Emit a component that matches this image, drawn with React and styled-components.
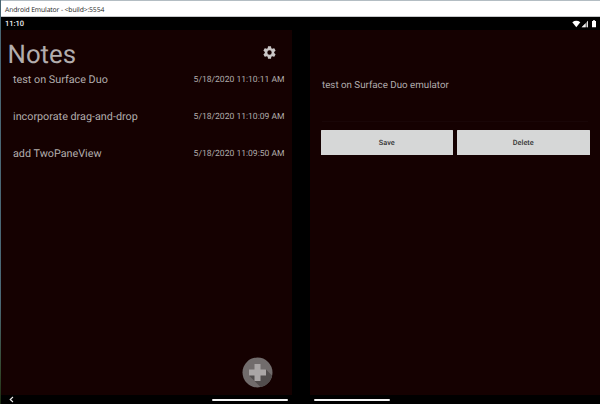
import React from "react";
import styled, { createGlobalStyle } from "styled-components";

const GlobalStyle = createGlobalStyle`
  * { box-sizing: border-box; }
  body { margin: 0; background: #000; overflow: hidden; }
`;

const Window = styled.div`
  display: flex;
  width: 600px;
  height: 404px;
  background: #000;
  font-family: Roboto, sans-serif;
  text-rendering: geometricPrecision;
  white-space: nowrap;
`;

const DesktopEdge = styled.div`
  flex: 0 0 1px;
  background: linear-gradient(#496572 0%, #4b6876 75%, #34482d 92%, #1d2c14 100%);
`;

const Screen = styled.div`
  flex: 1;
  display: flex;
  flex-direction: column;
`;

const TitleBar = styled.header`
  height: 17px;
  padding-left: 4px;
  border-top: 1px solid #b3bdc3;
  border-bottom: 1px solid #c6c8ca;
  background: #fff;
  color: #222;
  font: 6.8px/17px "Open Sans", sans-serif;
  letter-spacing: -0.12px;
`;

const StatusBar = styled.div`
  height: 13px;
  padding: 0 3px 0 4px;
  display: flex;
  align-items: center;
  justify-content: space-between;
  color: #f4f4f4;
  font-size: 7.5px;
  font-weight: 500;
  line-height: 13px;
`;

const StatusIcons = styled.svg`
  width: 26px;
  height: 10px;
`;

const Panes = styled.main`
  height: 365px;
  display: grid;
  grid-template-columns: 291px 290px;
  column-gap: 18px;
`;

const Pane = styled.section`
  display: flex;
  flex-direction: column;
  background: #150101;
  color: #b2adad;
`;

const ListHeader = styled.div`
  height: 39px;
  padding: 8px 15px 0 6.5px;
  display: flex;
  justify-content: space-between;
`;

const Heading = styled.h1`
  margin: 0;
  font-size: 25.8px;
  font-weight: 400;
  line-height: 34px;
`;

const GearIcon = styled.svg`
  width: 15px;
  height: 15px;
  margin-top: 7px;
`;

const NoteList = styled.ul`
  flex: 1;
  margin: 0;
  padding: 0;
  list-style: none;
`;

const NoteRow = styled.li`
  height: 37.2px;
  padding: 0 7.5px 0 12px;
  display: flex;
  justify-content: space-between;
  font-size: 10.8px;
  line-height: 22px;
`;

const NoteDate = styled.time`
  font-size: 8.55px;
  line-height: 23px;
`;

const AddButton = styled.button`
  align-self: flex-end;
  width: 31px;
  height: 31px;
  margin: 0 19px 7px 0;
  padding: 0;
  border: 0;
  background: none;
  line-height: 0;
`;

const NoteBody = styled.div`
  height: 92px;
  margin: 0 12px;
  padding-top: 45px;
  border-bottom: 1px solid #190607;
  color: #b2adad;
  font-size: 9.75px;
  line-height: 22px;
`;

const Actions = styled.div`
  padding: 8px 10.5px;
  display: grid;
  grid-template-columns: 1fr 1fr;
  column-gap: 4px;
`;

const ActionButton = styled.button`
  height: 25px;
  padding: 0;
  border: 0;
  border-radius: 0.5px;
  background: #d6d7d7;
  color: #333;
  font: 500 7.3px/25px Roboto, sans-serif;
  text-rendering: geometricPrecision;
`;

const NavBar = styled.footer`
  height: 9px;
  display: grid;
  grid-template-columns: 210.5px 76px 26.5px 75.5px;
  align-items: center;
`;

const BackIcon = styled.svg`
  width: 5px;
  height: 7px;
  margin-left: 8px;
`;

const GestureBar = styled.div`
  height: 2px;
  border-radius: 1px;
  background: #f5f5f5;
`;

const NOTES = [
  { title: "test on Surface Duo", date: "5/18/2020 11:10:11 AM" },
  { title: "incorporate drag-and-drop", date: "5/18/2020 11:10:09 AM" },
  { title: "add TwoPaneView", date: "5/18/2020 11:09:50 AM" },
];

export default function App() {
  return (
    <>
      <GlobalStyle />
      <Window>
        <DesktopEdge />
        <Screen>
          <TitleBar>{"Android Emulator - <build>:5554"}</TitleBar>
          <StatusBar>
            <span>11:10</span>
            <StatusIcons viewBox="0 0 26 10">
              <path d="M1.3 3.2Q5.3 .3 9.3 3.2L5.3 8.2Z" fill="#fff" />
              <path d="M10.6 8.2 17 1.8v6.4Z" fill="#777" />
              <path d="M10.6 8.2 14.6 4.2v4ZM16.1 2.7l.9-.9v6.4h-.9Z" fill="#eee" />
              <path d="M21 2.1h1V1.3h2v.8h1v6.2h-4Z" fill="#fff" />
            </StatusIcons>
          </StatusBar>
          <Panes>
            <Pane>
              <ListHeader>
                <Heading>Notes</Heading>
                <GearIcon viewBox="0 0 24 24">
                  <path
                    fill="#c9c6c6"
                    fillRule="evenodd"
                    d="M19.43 12.98c.04-.32.07-.64.07-.98s-.03-.66-.07-.98l2.11-1.65c.19-.15.24-.42.12-.64l-2-3.46c-.12-.22-.39-.3-.61-.22l-2.49 1c-.52-.4-1.08-.73-1.69-.98l-.38-2.65A.49.49 0 0 0 14 2h-4c-.25 0-.46.18-.49.42l-.38 2.65c-.61.25-1.17.59-1.69.98l-2.49-1c-.23-.09-.49 0-.61.22l-2 3.46c-.13.22-.07.49.12.64l2.11 1.65c-.04.32-.07.65-.07.98s.03.66.07.98l-2.11 1.65c-.19.15-.24.42-.12.64l2 3.46c.12.22.39.3.61.22l2.49-1c.52.4 1.08.73 1.69.98l.38 2.65c.03.24.24.42.49.42h4c.25 0 .46-.18.49-.42l.38-2.65c.61-.25 1.17-.59 1.69-.98l2.49 1c.23.09.49 0 .61-.22l2-3.46c.12-.22.07-.49-.12-.64ZM12 15.5a3.5 3.5 0 1 1 0-7 3.5 3.5 0 0 1 0 7Z"
                  />
                </GearIcon>
              </ListHeader>
              <NoteList>
                {NOTES.map((note) => (
                  <NoteRow key={note.date}>
                    <span>{note.title}</span>
                    <NoteDate>{note.date}</NoteDate>
                  </NoteRow>
                ))}
              </NoteList>
              <AddButton aria-label="Add note">
                <svg width="31" height="31" viewBox="0 0 31 31">
                  <clipPath id="disc"><circle cx="15.5" cy="15.5" r="15" /></clipPath>
                  <circle cx="15.5" cy="15.5" r="15" fill="#716c6c" />
                  <path clipPath="url(#disc)" fill="#514d4d" d="M7 18.5 20 31.5H31V19.5L24 12.5Z" />
                  <path fill="#aaa6a6" d="M12.5 7h6v5.5H24v6h-5.5V24h-6v-5.5H7v-6h5.5Z" />
                </svg>
              </AddButton>
            </Pane>
            <Pane>
              <NoteBody>test on Surface Duo emulator</NoteBody>
              <Actions>
                <ActionButton>Save</ActionButton>
                <ActionButton>Delete</ActionButton>
              </Actions>
            </Pane>
          </Panes>
          <NavBar>
            <BackIcon viewBox="0 0 5 7">
              <path d="M4 1 1.2 3.5 4 6" fill="none" stroke="#eee" strokeWidth="1.1" />
            </BackIcon>
            <GestureBar />
            <span />
            <GestureBar />
          </NavBar>
        </Screen>
      </Window>
    </>
  );
}
